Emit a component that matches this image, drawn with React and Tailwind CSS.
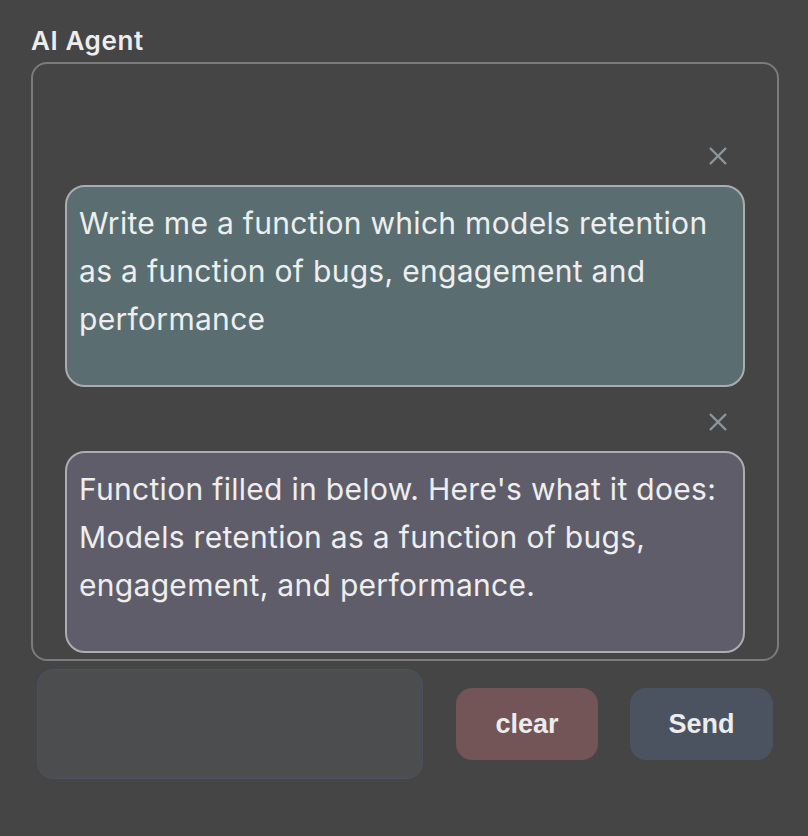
import React from 'react';

const messages = [
  {
    text: 'Write me a function which models retention as a function of bugs, engagement and performance',
    bg: 'bg-[#5a6e72]',
    border: 'border-[#a9adaf]',
  },
  {
    text: "Function filled in below. Here's what it does: Models retention as a function of bugs, engagement, and performance.",
    bg: 'bg-[#605d6a]',
    border: 'border-[#adacb1]',
  },
];

const CloseIcon = () => (
  <svg width="20" height="20" viewBox="0 0 20 20" fill="none" stroke="#8a959e" strokeWidth="2.4" strokeLinecap="butt">
    <line x1="2" y1="2" x2="18" y2="18" />
    <line x1="18" y1="2" x2="2" y2="18" />
  </svg>
);

export default function App() {
  return (
    <div className="min-h-[836px] w-[808px] bg-[#454545] font-['Inter','Noto_Sans',sans-serif] text-[#ececec]">
      <div className="pl-[31px] pt-[24px] pr-[29px]">
        {/* title */}
        <h1 className="text-[26px] leading-[34px] font-semibold tracking-[0.6px] text-[#ededed] mb-[4px]">AI Agent</h1>

        {/* chat history */}
        <div className="h-[599px] border-2 border-[#7b7b7b] rounded-[16px] px-[32px] pb-[6px] flex flex-col justify-end overflow-hidden">
          {messages.map((msg, i) => (
            <div key={i} className={`flex flex-col ${i > 0 ? 'mt-[25px]' : ''}`}>
              <div className="flex justify-end pr-[17px] mb-[19px]">
                <button className="w-[20px] h-[20px] flex items-center justify-center">
                  <CloseIcon />
                </button>
              </div>
              <div className={`h-[202px] border-2 ${msg.border} ${msg.bg} rounded-[20px] px-[12px] pt-[12px] text-[30px] leading-[48px] tracking-[0.3px] text-[#eeeeee]`}>
                {msg.text}
              </div>
            </div>
          ))}
        </div>

        {/* input row */}
        <div className="flex items-center mt-[8px] ml-[6px]">
          <textarea className="w-[386px] h-[110px] bg-[#4c4d4f] border border-[#4a5262] rounded-[16px] resize-none outline-none" />
          <button className="ml-[33px] w-[142px] h-[72px] rounded-[16px] bg-[#735457] font-['Liberation_Sans',Arial,sans-serif] font-bold text-[27px] text-[#ececec]">
            clear
          </button>
          <button className="ml-[32px] w-[143px] h-[72px] rounded-[16px] bg-[#4b5361] font-['Liberation_Sans',Arial,sans-serif] font-bold text-[27px] text-[#ececec]">
            Send
          </button>
        </div>
      </div>
    </div>
  );
}
